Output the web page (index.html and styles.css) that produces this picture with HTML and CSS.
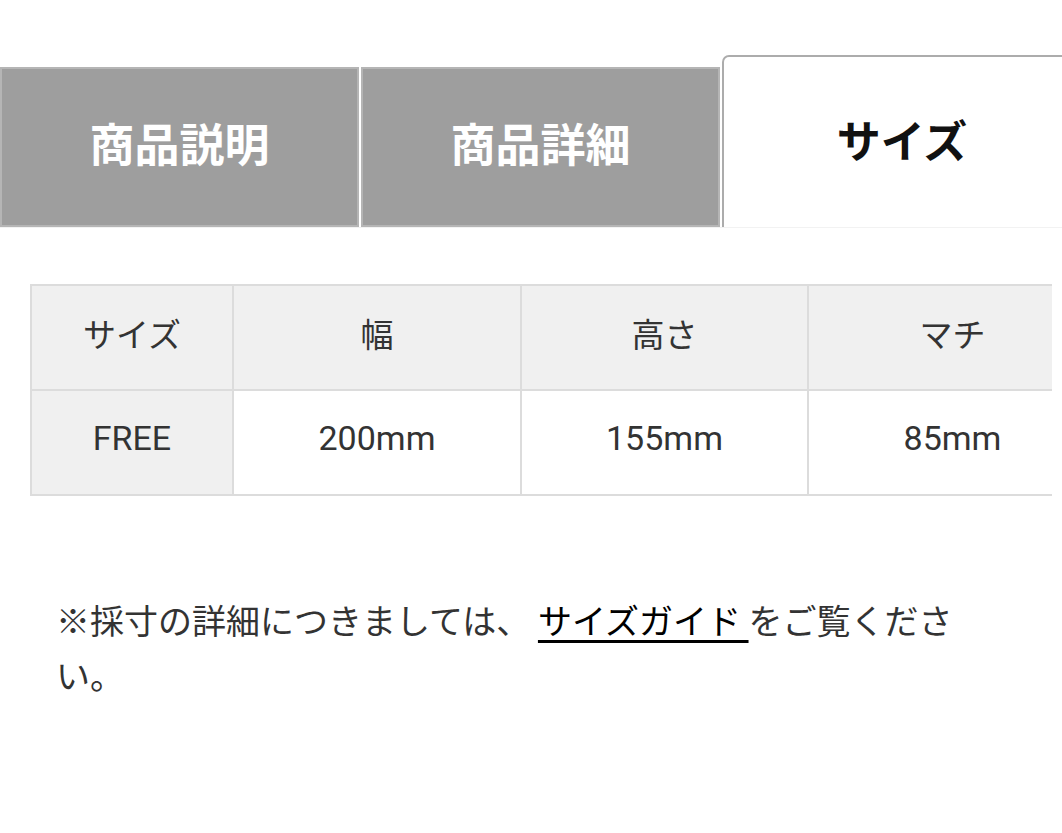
FILE: index.html
```html
<!DOCTYPE html>
<html lang="ja">
<head>
<meta charset="utf-8">
<title>サイズ</title>
<link rel="stylesheet" href="styles.css">
</head>
<body>
<div class="page">
  <div class="tabs">
    <div class="tab">商品説明</div>
    <div class="tab">商品詳細</div>
    <div class="tab active">サイズ</div>
  </div>
  <div class="table-wrap">
    <table class="size-table">
      <colgroup>
        <col class="c1"><col class="c2"><col class="c3"><col class="c4">
      </colgroup>
      <tr class="head">
        <th>サイズ</th><th>幅</th><th>高さ</th><th>マチ</th>
      </tr>
      <tr>
        <th>FREE</th><td>200mm</td><td>155mm</td><td>85mm</td>
      </tr>
    </table>
  </div>
  <p class="note">※採寸の詳細につきましては、 <a href="#" class="guide">サイズガイド </a>をご覧ください。</p>
</div>
</body>
</html>
```

FILE: styles.css
```css
html, body {
  margin: 0;
  padding: 0;
  background: #fff;
}
body {
  width: 1062px;
  height: 833px;
  overflow: hidden;
  font-family: Roboto, "Noto Sans CJK JP", sans-serif;
  color: #333;
}
.page {
  width: 1062px;
}
.tabs {
  display: flex;
  align-items: flex-end;
  gap: 2px;
  padding-top: 55px;
  border-bottom: 1px solid #f2f2f2;
}
.tab {
  flex: 0 0 auto;
  box-sizing: border-box;
  width: 359px;
  height: 160px;
  background: #9e9e9e;
  border: 2px solid #b5b5b5;
  color: #fff;
  font-family: "Noto Sans CJK JP", sans-serif;
  font-weight: 700;
  font-size: 45px;
  display: flex;
  align-items: center;
  justify-content: center;
  padding-bottom: 10px;
}
.tab.active {
  width: 360px;
  height: 172px;
  background: #fff;
  color: #111;
  font-size: 44px;
  border: 2px solid #acacac;
  border-bottom: none;
  border-top-left-radius: 7px;
  padding-bottom: 6px;
}
.table-wrap {
  margin: 56px 10px 0 30px;
  overflow: hidden;
}
.size-table {
  border-collapse: collapse;
  table-layout: fixed;
  width: 1066px;
  font-size: 33px;
}
.size-table .c1 { width: 202px; }
.size-table .c2 { width: 288px; }
.size-table .c3 { width: 287px; }
.size-table .c4 { width: 289px; }
.size-table th,
.size-table td {
  height: 93px;
  border: 2px solid #dcdcdc;
  text-align: center;
  vertical-align: middle;
  font-weight: 400;
  padding: 0 0 10px;
  color: #333;
}
.size-table td {
  font-size: 34px;
  background: #fff;
}
.size-table th {
  background: #f0f0f0;
}
.size-table tr + tr th {
  font-size: 34px;
}
.note {
  margin: 96px 72px 0 56px;
  font-family: "Noto Sans CJK JP", sans-serif;
  font-size: 34px;
  line-height: 55px;
  color: #333;
}
.guide {
  color: #000;
  text-decoration: underline;
  text-decoration-thickness: 3px;
  text-underline-offset: 6px;
}
```
